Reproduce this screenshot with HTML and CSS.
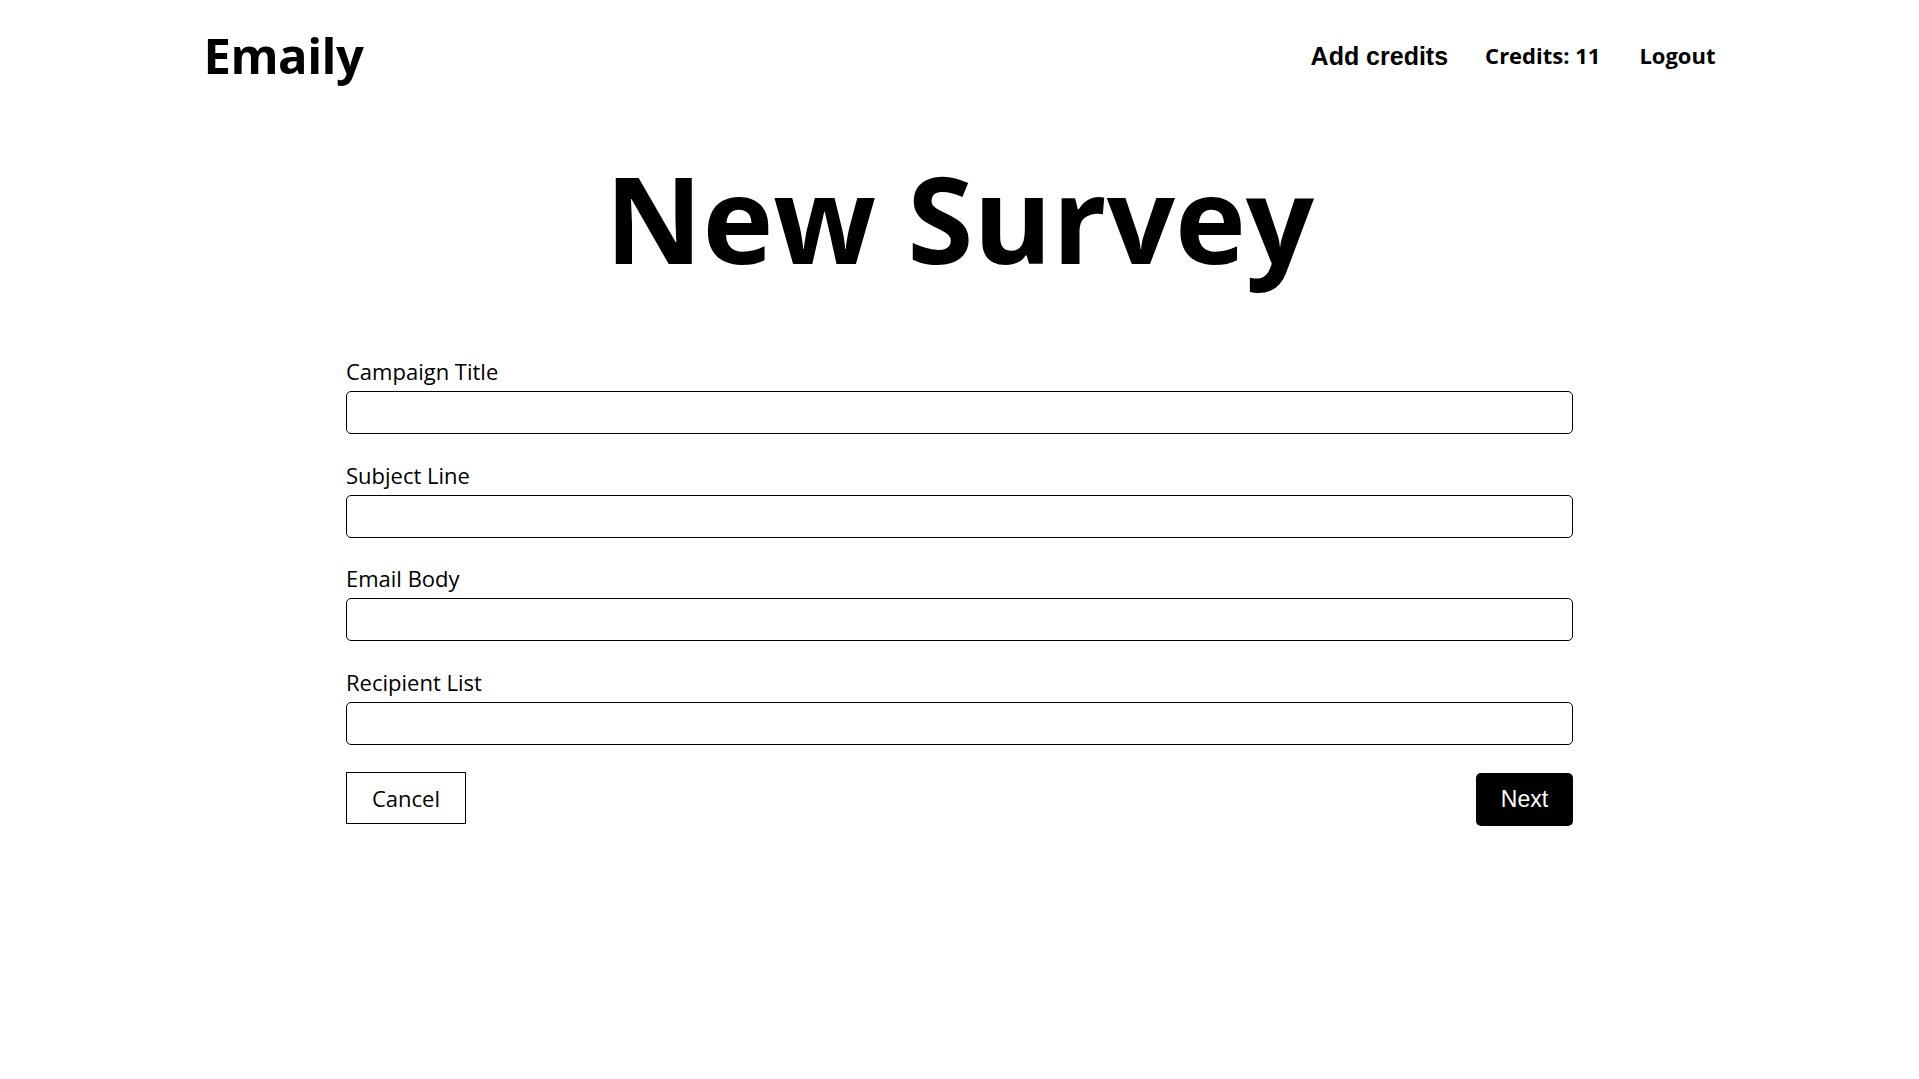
FILE: index.html
```html
<!DOCTYPE html>
<html lang="en">
<head>
<meta charset="utf-8">
<title>Emaily</title>
<link rel="stylesheet" href="styles.css">
</head>
<body>
<header class="header">
  <a class="brand" href="#">Emaily</a>
  <nav class="nav">
    <a class="nav-add" href="#">Add credits</a>
    <span class="nav-credits">Credits: 11</span>
    <a class="nav-logout" href="#">Logout</a>
  </nav>
</header>
<main class="main">
  <h1 class="title">New Survey</h1>
  <form class="form">
    <div class="field">
      <label class="label">Campaign Title</label>
      <input class="input" type="text">
    </div>
    <div class="field">
      <label class="label">Subject Line</label>
      <input class="input" type="text">
    </div>
    <div class="field">
      <label class="label">Email Body</label>
      <input class="input" type="text">
    </div>
    <div class="field">
      <label class="label">Recipient List</label>
      <input class="input" type="text">
    </div>
    <div class="actions">
      <button class="btn-cancel" type="button">Cancel</button>
      <button class="btn-next" type="button">Next</button>
    </div>
  </form>
</main>
</body>
</html>
```
FILE: styles.css
```css
* { box-sizing: border-box; }
html, body { margin: 0; padding: 0; background: #fff; color: #000; }
body { font-family: "Open Sans", "Noto Sans", sans-serif; }
a { color: #000; text-decoration: none; }

.header {
  width: 1512px;
  margin: 0 auto;
  padding-top: 31px;
  display: flex;
  justify-content: space-between;
  align-items: flex-start;
}
.brand {
  font-size: 49px;
  font-weight: 700;
  line-height: 48px;
  letter-spacing: -0.5px;
}
.nav {
  display: flex;
  align-items: baseline;
  gap: 39px;
  padding-top: 9px;
}
.nav-add {
  font-family: "Liberation Sans", Arial, sans-serif;
  font-weight: 700;
  font-size: 25px;
  position: relative;
  top: 1px;
  margin-right: -2px;
}
.nav-credits, .nav-logout {
  font-weight: 700;
  font-size: 22px;
}

.main {
  width: 1227px;
  margin: 0 auto;
}
.title {
  margin: 0;
  padding-top: 69px;
  text-align: center;
  font-size: 120px;
  line-height: 140px;
  font-weight: 700;
}
.form {
  margin-top: 69px;
  display: flex;
  flex-direction: column;
  gap: 26.5px;
}
.field {
  display: flex;
  flex-direction: column;
  gap: 6px;
}
.label {
  font-size: 22px;
  line-height: 28px;
}
.input {
  height: 43px;
  border: 1.5px solid #000;
  border-radius: 5px;
  font: inherit;
  font-size: 18px;
  padding: 0 10px;
  background: #fff;
}
.actions {
  display: flex;
  justify-content: space-between;
  align-items: flex-start;
  margin-top: 1px;
}
.btn-cancel {
  width: 120px;
  height: 52px;
  border: 1px solid #000;
  border-radius: 0;
  background: #fff;
  font-family: "Open Sans", "Noto Sans", sans-serif;
  font-size: 22px;
  color: #000;
  padding: 0;
}
.btn-next {
  width: 97px;
  height: 53px;
  border: none;
  border-radius: 5px;
  background: #000;
  color: #fff;
  font-family: "Liberation Sans", Arial, sans-serif;
  font-size: 23px;
  padding: 0;
  margin-top: 1px;
}
```
